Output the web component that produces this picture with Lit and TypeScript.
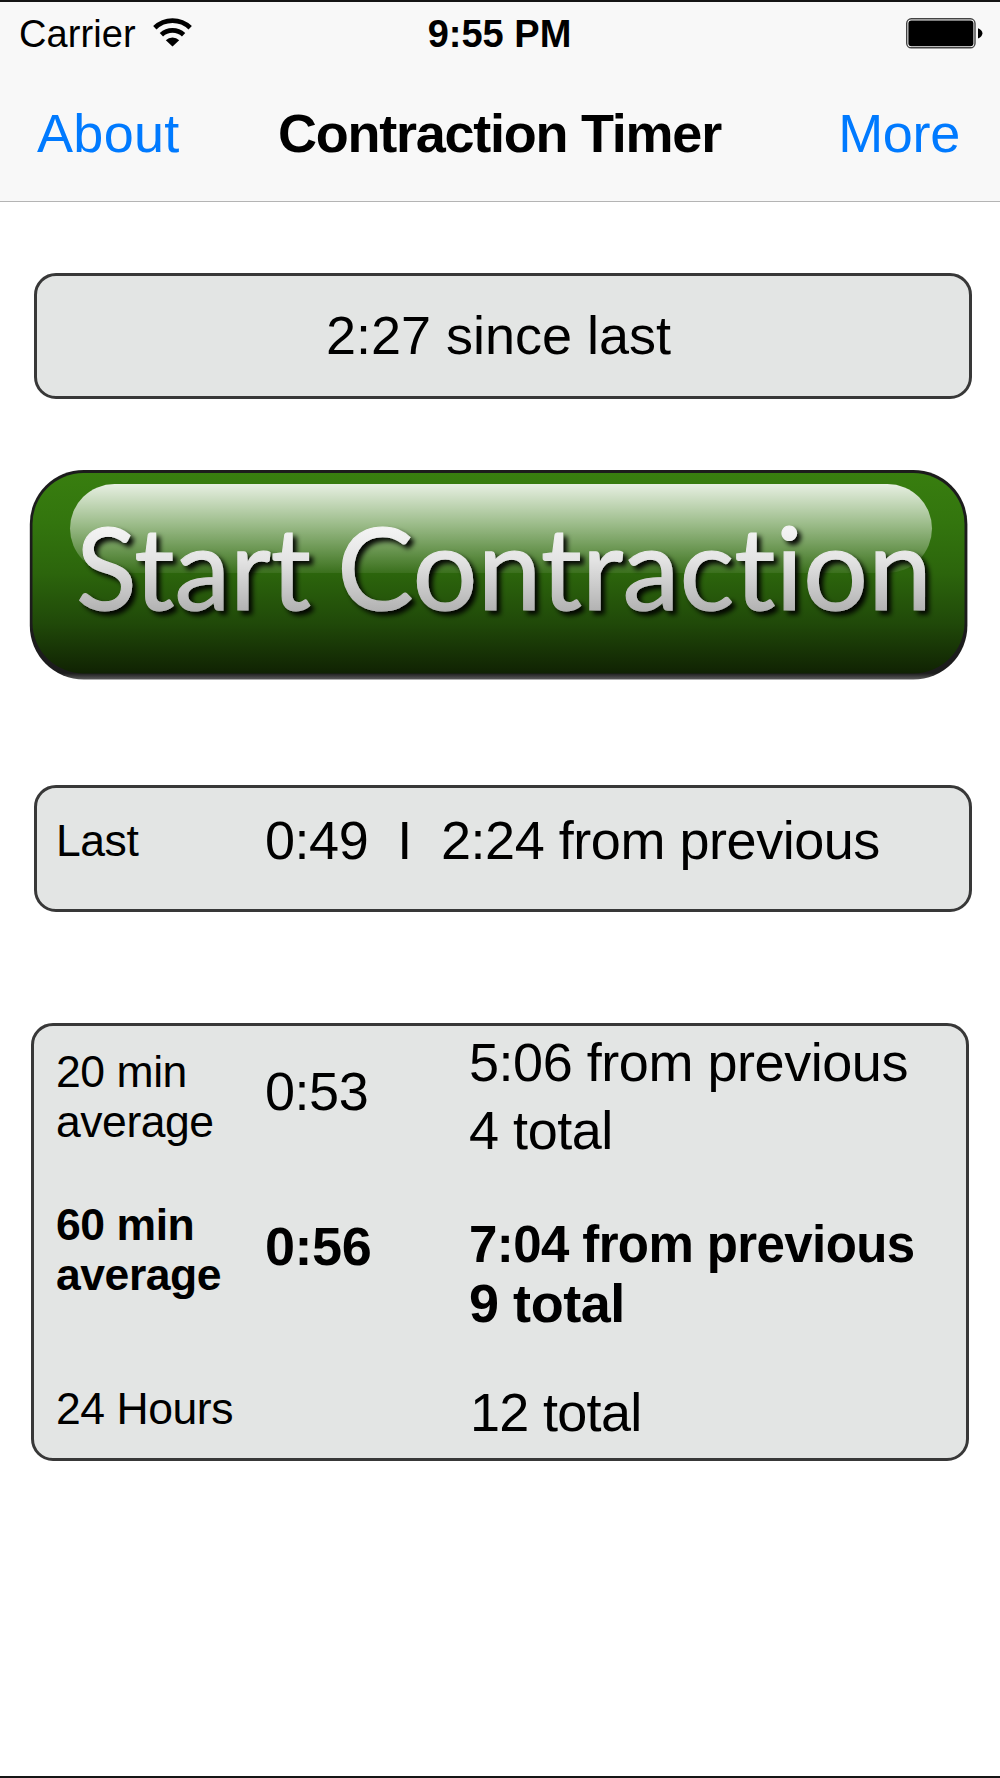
import { LitElement, html, svg, css } from "lit";
import { customElement, property } from "lit/decorators.js";

@customElement("status-bar")
class StatusBar extends LitElement {
  static styles = css`
    :host { display: grid; grid-template-columns: 1fr auto 1fr; height: 64px; align-items: start; line-height: 40px; padding: 12px 17px 0 19px; font-size: 38px; box-sizing: border-box; }
    .carrier { display: flex; align-items: flex-start; gap: 17px; letter-spacing: 0.1px; }
    .wifi { width: 39px; height: 30px; margin-top: 4px; }
    .time { font-weight: 700; letter-spacing: 0; padding-right: 3px; }
    .battery { justify-self: end; width: 78px; height: 32px; margin-top: 3px; }
  `;
  render() {
    return html`
      <div class="carrier"><span>Carrier</span>
        <svg class="wifi" viewBox="0 0 39 30">
          <g fill="none" stroke="#000" stroke-width="4.8">
            <path d="M1.8 9.8 A25.5 25.5 0 0 1 37.2 9.8" />
            <path d="M8.4 16.8 A16.2 16.2 0 0 1 30.6 16.8" />
          </g>
          <path d="M19.5 28.6 L12.8 22.2 A9.4 9.4 0 0 1 26.2 22.2 Z" />
        </svg>
      </div>
      <span class="time">9:55 PM</span>
      <svg class="battery" viewBox="0 0 78 32">
        <rect x="1.7" y="1.8" width="68.3" height="29" rx="4.6" fill="#f8f8f8" stroke="#444" stroke-width="1.4" />
        <rect x="3.4" y="3.4" width="65" height="25.8" rx="3" />
        <path d="M73 11.2 Q77.4 13 77.4 16.2 Q77.4 19.6 73 21.6 Z" />
      </svg>`;
  }
}

@customElement("nav-bar")
class NavBar extends LitElement {
  static styles = css`
    :host { display: grid; grid-template-columns: 1fr auto 1fr; align-items: start; padding: 0 40px 0 37px; font-size: 54px; line-height: 60px; margin-top: 37px; }
    .link { color: #007aff; }
    .about { letter-spacing: 0.3px; }
    .more { justify-self: end; letter-spacing: -0.3px; }
    .title { font-weight: 700; letter-spacing: -1.25px; padding-left: 2px; }
  `;
  render() {
    return html`
      <span class="link about">About</span>
      <span class="title">Contraction Timer</span>
      <span class="link more">More</span>`;
  }
}

@customElement("glossy-button")
class GlossyButton extends LitElement {
  @property() first = "";
  @property() second = "";
  static styles = css`
    :host { display: block; }
    .art { display: block; width: 940px; height: 212px; }
    .word { font-family: Lato, "Open Sans", sans-serif; font-size: 114px; font-variant-ligatures: none; }
  `;
  render() {
    return html`
      <svg class="art" viewBox="0 0 940 212" role="button">
        <defs>
          <linearGradient id="body" x1="0" y1="0" x2="0" y2="1">
            <stop offset="0" stop-color="#387e0f" />
            <stop offset="0.25" stop-color="#33750e" />
            <stop offset="0.5" stop-color="#2c650c" />
            <stop offset="0.75" stop-color="#204909" />
            <stop offset="1" stop-color="#102203" />
          </linearGradient>
          <linearGradient id="gloss" x1="0" y1="0" x2="0" y2="1">
            <stop offset="0" stop-color="#fff" stop-opacity="0.88" />
            <stop offset="1" stop-color="#fff" stop-opacity="0.07" />
          </linearGradient>
          <linearGradient id="ink" gradientUnits="userSpaceOnUse" x1="0" y1="56" x2="0" y2="142">
            <stop offset="0" stop-color="#f5f5f5" />
            <stop offset="0.4" stop-color="#e4e4e4" />
            <stop offset="1" stop-color="#b2b2b2" />
          </linearGradient>
          <linearGradient id="rim" x1="0" y1="0" x2="0" y2="1">
            <stop offset="0.6" stop-color="#1c1c1c" />
            <stop offset="0.97" stop-color="#1c1c1c" />
            <stop offset="1" stop-color="#5c5c5c" />
          </linearGradient>
          <filter id="drop" x="-5%" y="-20%" width="110%" height="150%">
            <feDropShadow dx="4" dy="4" stdDeviation="2.6" flood-color="#000" flood-opacity="0.95" />
          </filter>
        </defs>
        <rect x="0.8" y="1" width="937.6" height="209.5" rx="54" fill="url(#rim)" />
        <rect x="3.5" y="4" width="932" height="200.5" rx="51" fill="url(#body)" />
        <rect x="41" y="15" width="862" height="89" rx="44.5" fill="url(#gloss)" />
        <g fill="url(#ink)" stroke="url(#ink)" stroke-width="1.1" filter="url(#drop)">
          ${svg`<text class="word" x="47" y="140.5" textLength="235" lengthAdjust="spacingAndGlyphs">${this.first}</text>
          <text class="word" x="308" y="140.5" textLength="595" lengthAdjust="spacingAndGlyphs">${this.second}</text>`}
        </g>
      </svg>`;
  }
}

@customElement("app-root")
class AppRoot extends LitElement {
  static styles = css`
    :host { display: flex; flex-direction: column; height: 1778px; box-sizing: border-box; background: #fff; border-top: 2px solid #151515; border-bottom: 2px solid #151515; color: #000; font-family: "Liberation Sans", Arial, sans-serif; overflow: hidden; }
    .header { height: 200px; box-sizing: border-box; background: #f8f8f8; border-bottom: 1px solid #b4b4b4; flex: none; }
    .panel { box-sizing: border-box; border: 3px solid #383838; border-radius: 22px; background: #e3e5e4; flex: none; }
    .since { margin: 71px 28px 0 34px; height: 126px; text-align: center; font-size: 54px; line-height: 60px; padding: 29px 9px 0 0; }
    .start { margin: 70px 0 0 29px; flex: none; }
    .last { margin: 104px 28px 0 34px; height: 127px; display: grid; grid-template-columns: 209px 1fr; padding-left: 19px; }
    .stats { margin: 111px 31px 0 31px; height: 438px; display: grid; grid-template-columns: 209px 204px 1fr; grid-template-rows: 160px 180px 1fr; padding-left: 22px; }
    .label { font-size: 44.5px; line-height: 50px; letter-spacing: -0.45px; }
    .value { font-size: 54px; line-height: 60px; letter-spacing: -0.46px; white-space: pre; }
    .since-text { letter-spacing: 0; }
    .last .label { margin-top: 28px; }
    .last .value { margin-top: 22px; }
    .r1, .r2, .r3 { display: contents; }
    .r1 .label { margin-top: 21px; }
    .r1 .value { margin-top: 35px; }
    .r1 .detail { margin-top: 2px; line-height: 68px; }
    .r2 { font-weight: 700; }
    .r2 .label { margin-top: 14px; }
    .r2 .value { margin-top: 30px; }
    .r2 .detail { margin-top: 28px; line-height: 58px; }
    .small { font-size: 51px; letter-spacing: -0.6px; }
    .r3 .label { margin-top: 18px; }
    .r3 .detail { margin: 16px 0 0 1px; letter-spacing: -0.7px; }
  `;
  render() {
    return html`
      <div class="header">
        <status-bar></status-bar>
        <nav-bar></nav-bar>
      </div>
      <div class="panel since"><span class="since-text">2:27 since last</span></div>
      <glossy-button class="start" first="Start" second="Contraction"></glossy-button>
      <div class="panel last">
        <div class="label">Last</div>
        <div class="value">0:49  I  2:24 from previous</div>
      </div>
      <div class="panel stats">
        <div class="r1">
          <div class="label">20 min<br />average</div>
          <div class="value">0:53</div>
          <div class="value detail">5:06 from previous<br />4 total</div>
        </div>
        <div class="r2">
          <div class="label">60 min<br />average</div>
          <div class="value">0:56</div>
          <div class="value detail"><span class="small">7:04 from previous</span><br />9 total</div>
        </div>
        <div class="r3">
          <div class="label">24 Hours</div>
          <div class="value"></div>
          <div class="value detail">12 total</div>
        </div>
      </div>`;
  }
}
